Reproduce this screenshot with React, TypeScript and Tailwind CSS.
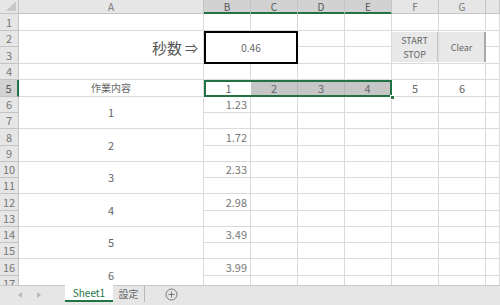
import React from 'react';

const font = { fontFamily: '"Noto Sans CJK JP", "Noto Sans", sans-serif' };

const cell = 'border-r border-b border-[#dadada] overflow-hidden whitespace-nowrap';
const hdr = 'flex items-center justify-center border-r border-b border-[#c4c4c4] bg-[#e6e6e6] text-[10px] text-[#777]';
const hdrSel = 'flex items-center justify-center border-r border-b border-[#c4c4c4] border-b-[#217346] shadow-[inset_0_-1px_0_#217346] bg-[#d2d2d2] text-[10px] text-[#555]';

function RowHdr({ n, sel = false }: { n: number; sel?: boolean }) {
  return (
    <div
      className={
        sel
          ? 'flex items-center justify-center border-b border-[#c4c4c4] border-r-2 border-r-[#217346] bg-[#d2d2d2] text-[11px] text-[#555]'
          : 'flex items-center justify-center border-r border-b border-[#c4c4c4] bg-[#e6e6e6] text-[11px] text-[#777]'
      }
    >
      {n}
    </div>
  );
}

function Blank({ count }: { count: number }) {
  return (
    <>
      {Array.from({ length: count }).map((_, i) => (
        <div key={i} className={cell} />
      ))}
    </>
  );
}

const times = ['1.23', '1.72', '2.33', '2.98', '3.49', '3.99'];

export default function App() {
  return (
    <div className="w-[500px] h-[305px] overflow-hidden bg-white flex flex-col leading-none" style={font}>
      <div className="h-[285px] overflow-hidden">
        <div className="grid grid-cols-[19px_185px_47px_47px_47px_47px_47px_47px_1fr] grid-rows-[14px_17px_16px_17px_16px_17px_16px_16px_17px_16px_16px_16px_17px_16px_16px_16px_17px_16px]">
          {/* column headers */}
          <div className="relative border-r border-b border-[#c4c4c4] bg-[#e6e6e6]">
            <svg className="absolute right-[2px] bottom-[2px]" width="10" height="10" viewBox="0 0 10 10">
              <path d="M10 0 L10 10 L0 10 Z" fill="#c8c8c8" />
            </svg>
          </div>
          <div className={hdr}>A</div>
          <div className={hdrSel}>B</div>
          <div className={hdrSel}>C</div>
          <div className={hdrSel}>D</div>
          <div className={hdrSel}>E</div>
          <div className={hdr}>F</div>
          <div className={hdr}>G</div>
          <div className={hdr} />

          {/* row 1 */}
          <RowHdr n={1} />
          <Blank count={8} />

          {/* row 2 */}
          <RowHdr n={2} />
          <div className={`${cell} row-span-2 flex items-center justify-end pr-[5px] text-[15px] text-[#555]`}>
            秒数<span className="ml-[3px] text-[13px]">⇒</span>
          </div>
          <div className="col-span-2 row-span-2 flex items-center justify-center border-2 border-black text-[10px] text-[#666]">0.46</div>
          <div className={cell} />
          <div className={cell} />
          <div className={`${cell} row-span-2 pt-px pb-px`}>
            <div className="h-full flex flex-col items-center justify-center gap-[5px] bg-[#e8e8e8] border-r border-[#c8c8c8] text-[9px] text-[#666]">
              <span>START</span>
              <span>STOP</span>
            </div>
          </div>
          <div className="row-span-2 border-b border-[#dadada] pt-px pb-px">
            <div className="h-full flex items-center justify-center bg-[#e8e8e8] border-r-2 border-[#a8a8a8] text-[9px] text-[#666]">
              Clear
            </div>
          </div>
          <div className={cell} />

          {/* row 3 */}
          <RowHdr n={3} />
          <div className={cell} />
          <div className={cell} />
          <div className={cell} />

          {/* row 4 */}
          <RowHdr n={4} />
          <Blank count={8} />

          {/* row 5 */}
          <RowHdr n={5} sel />
          <div className={`${cell} flex items-center justify-center text-[10px] text-[#666]`}>作業内容</div>
          <div className="col-span-4 relative">
            <div className="h-full grid grid-cols-[45px_47px_47px_1fr] border-2 border-[#217346] text-[11px] text-[#666]">
              <div className="flex items-center justify-center bg-white">1</div>
              <div className="flex items-center justify-center bg-[#c6c6c6] border-r border-[#b4b4b4]">2</div>
              <div className="flex items-center justify-center bg-[#c6c6c6] border-r border-[#b4b4b4]">3</div>
              <div className="flex items-center justify-center bg-[#c6c6c6]">4</div>
            </div>
            <div className="absolute right-[-3px] bottom-[-3px] w-[5px] h-[5px] bg-[#217346] border border-white" />
          </div>
          <div className={`${cell} flex items-center justify-center text-[11px] text-[#666]`}>5</div>
          <div className={`${cell} flex items-center justify-center text-[11px] text-[#666]`}>6</div>
          <div className={cell} />

          {/* rows 6-17 */}
          {times.map((t, i) => {
            const r = 6 + i * 2;
            return (
              <React.Fragment key={r}>
                <RowHdr n={r} />
                <div className={`${cell} row-span-2 flex items-center justify-center text-[11px] text-[#666]`}>{i + 1}</div>
                <div className={`${cell} flex items-center justify-end pr-[3px] text-[11px] text-[#777]`}>{t}</div>
                <Blank count={6} />
                <RowHdr n={r + 1} />
                <Blank count={7} />
              </React.Fragment>
            );
          })}
        </div>
      </div>

      {/* sheet tabs */}
      <div className="h-[20px] flex items-start bg-[#e6e6e6] border-t border-[#c8c8c8]">
        <div className="w-[65px] h-[17px] flex items-center">
          <svg className="ml-[18px]" width="4" height="6" viewBox="0 0 4 6">
            <path d="M4 0 L0 3 L4 6 Z" fill="#b8b8b8" />
          </svg>
          <svg className="ml-[15px]" width="4" height="6" viewBox="0 0 4 6">
            <path d="M0 0 L4 3 L0 6 Z" fill="#b8b8b8" />
          </svg>
        </div>
        <div className="w-[48px] h-[17px] -mt-px flex items-center justify-center bg-white border-b-2 border-[#217346] text-[10px] text-[#217346]">
          Sheet1
        </div>
        <div className="w-[32px] h-[16px] flex items-center justify-center border-r border-[#b8b8b8] text-[10px] text-[#666]">
          設定
        </div>
        <div className="ml-[20px] h-[16px] flex items-center">
          <svg width="13" height="13" viewBox="0 0 13 13">
            <circle cx="6.5" cy="6.5" r="5.5" fill="none" stroke="#777" strokeWidth="1" />
            <path d="M6.5 3.5 V9.5 M3.5 6.5 H9.5" stroke="#777" strokeWidth="1" />
          </svg>
        </div>
      </div>
    </div>
  );
}
